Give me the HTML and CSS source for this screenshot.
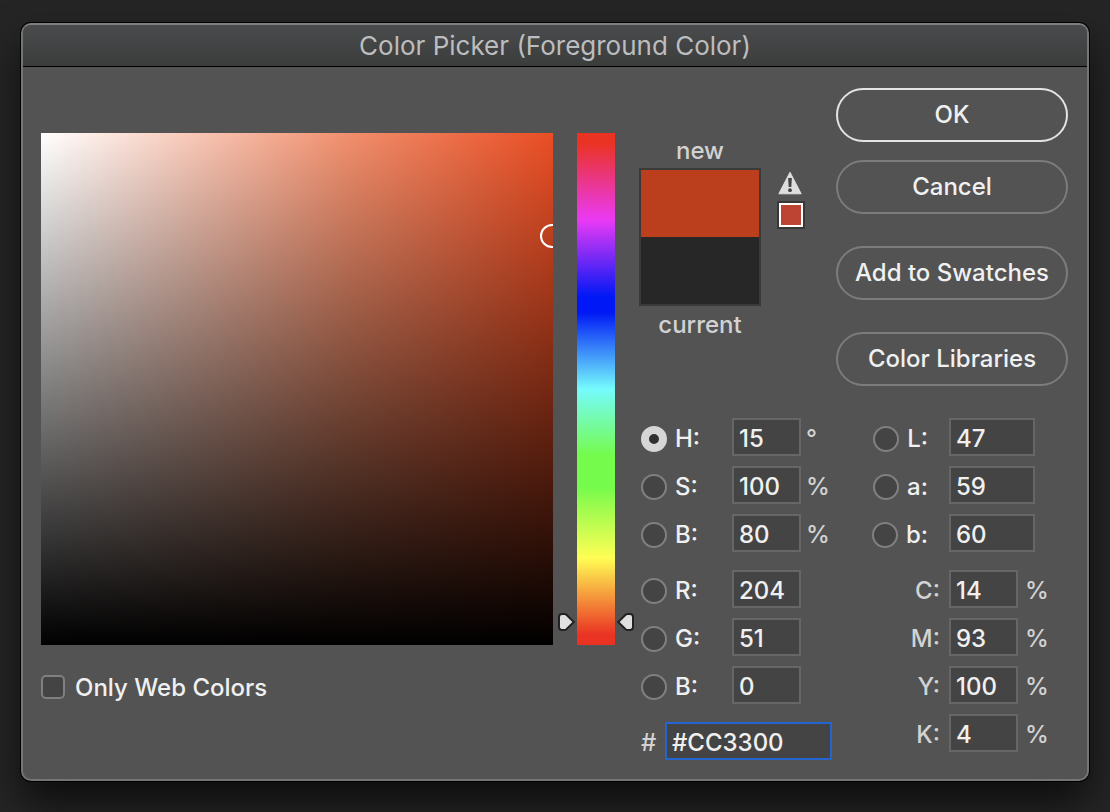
FILE: index.html
```html
<!DOCTYPE html>
<html lang="en">
<head>
<meta charset="utf-8">
<title>Color Picker</title>
<link rel="stylesheet" href="styles.css">
</head>
<body>
<main class="dialog">
  <header class="titlebar"><h1 class="title">Color Picker (Foreground Color)</h1></header>
  <form class="content">
    <section class="picker">
      <div class="picker-row">
        <div class="field"><span class="marker"></span></div>
        <div class="hue">
          <svg class="handle handle-left" width="20" height="20" viewBox="0 0 20 20"><path d="M5 2h2.400a3 3 0 0 1 2 .8L16.800 10l-7.400 7.200a3 3 0 0 1-2 .8H5a3 3 0 0 1-3-3V5a3 3 0 0 1 3-3z"/></svg>
          <svg class="handle handle-right" width="20" height="20" viewBox="0 0 20 20"><path d="M15 2h-2.400a3 3 0 0 0-2 .8L3.200 10l7.400 7.200a3 3 0 0 0 2 .8H15a3 3 0 0 0 3-3V5a3 3 0 0 0-3-3z"/></svg>
        </div>
      </div>
      <label class="web-only"><input class="check" type="checkbox"><span class="web-label">Only Web Colors</span></label>
    </section>

    <section class="panel">
      <div class="panel-top">
        <div class="preview">
          <span class="caption">new</span>
          <div class="swatches"><span class="swatch-new"></span><span class="swatch-current"></span></div>
          <span class="caption caption-current">current</span>
        </div>
        <div class="gamut">
          <svg width="26" height="24" viewBox="0 0 26 24"><path class="warn" d="M13 1.200L24.200 22.800H1.800z"/><path class="warn-mark" d="M11.100 7h3.800l-.6 9h-2.600z"/><circle class="warn-mark" cx="13" cy="19.200" r="1.900"/></svg>
          <span class="gamut-color"></span>
        </div>
        <div class="actions">
          <button class="btn btn-primary" type="button">OK</button>
          <button class="btn btn-cancel" type="button">Cancel</button>
          <button class="btn" type="button">Add to Swatches</button>
          <button class="btn" type="button">Color Libraries</button>
        </div>
      </div>

      <div class="values">
        <div class="column">
          <div class="group">
            <div class="row"><label class="mode"><input class="radio" type="radio" name="mode" checked>H:</label><input class="num" type="text" aria-label="Hue" value="15"><span class="unit">°</span></div>
            <div class="row"><label class="mode"><input class="radio" type="radio" name="mode">S:</label><input class="num" type="text" aria-label="Saturation" value="100"><span class="unit">%</span></div>
            <div class="row"><label class="mode"><input class="radio" type="radio" name="mode">B:</label><input class="num" type="text" aria-label="Brightness" value="80"><span class="unit">%</span></div>
          </div>
          <div class="group">
            <div class="row"><label class="mode"><input class="radio" type="radio" name="mode">R:</label><input class="num" type="text" aria-label="Red" value="204"></div>
            <div class="row"><label class="mode"><input class="radio" type="radio" name="mode">G:</label><input class="num" type="text" aria-label="Green" value="51"></div>
            <div class="row"><label class="mode"><input class="radio" type="radio" name="mode">B:</label><input class="num" type="text" aria-label="Blue" value="0"></div>
          </div>
          <div class="row"><label class="hash" for="hex">#</label><input class="num hex" id="hex" type="text" value="#CC3300"></div>
        </div>
        <div class="column column-right">
          <div class="group">
            <div class="row"><label class="mode mode-lab"><input class="radio" type="radio" name="mode">L:</label><input class="num num-lab" type="text" aria-label="Lightness" value="47"></div>
            <div class="row"><label class="mode mode-lab"><input class="radio" type="radio" name="mode">a:</label><input class="num num-lab" type="text" aria-label="a" value="59"></div>
            <div class="row"><label class="mode mode-lab"><input class="radio" type="radio" name="mode">b:</label><input class="num num-lab" type="text" aria-label="b" value="60"></div>
          </div>
          <div class="group">
            <div class="row"><label class="ink" for="c">C:</label><input class="num" id="c" type="text" value="14"><span class="unit unit-ink">%</span></div>
            <div class="row"><label class="ink" for="m">M:</label><input class="num" id="m" type="text" value="93"><span class="unit unit-ink">%</span></div>
            <div class="row"><label class="ink" for="y">Y:</label><input class="num" id="y" type="text" value="100"><span class="unit unit-ink">%</span></div>
            <div class="row"><label class="ink" for="k">K:</label><input class="num" id="k" type="text" value="4"><span class="unit unit-ink">%</span></div>
          </div>
        </div>
      </div>
    </section>
  </form>
</main>
</body>
</html>
```
FILE: styles.css
```css
* { box-sizing: border-box; }

body {
  margin: 0;
  padding: 23px 21px 31px;
  background: #252525;
  color: #f0f0f0;
  font: 500 24px/30px Inter, "Liberation Sans", sans-serif;
}

.dialog {
  border: 2px solid #757575;
  border-top-color: #7e8080;
  border-radius: 10px;
  background: #535353;
  box-shadow: 0 0 0 1px #000, 0 22px 40px rgba(0, 0, 0, .65);
}

.titlebar {
  display: flex;
  justify-content: center;
  align-items: center;
  height: 42px;
  border-bottom: 1px solid #000;
  border-radius: 8px 8px 0 0;
  background: linear-gradient(#4a4b4c, #3b3c3c);
}

.title {
  margin: 0;
  color: #bcbdbe;
  font-size: 26px;
  font-weight: 400;
}

.content {
  display: flex;
  gap: 24px;
  padding: 21px 19px 19px 18px;
}

.picker {
  flex: 1;
  padding-top: 45px;
}

.picker-row {
  display: flex;
  gap: 24px;
}

.field {
  position: relative;
  flex: 1;
  aspect-ratio: 1;
  overflow: hidden;
  background:
    linear-gradient(transparent, #000),
    linear-gradient(to right, #fff, #f18f6d 60%, #ea4e24);
}

.marker {
  position: absolute;
  top: 91px;
  right: -11px;
  width: 24px;
  height: 24px;
  border: 2px solid #fff;
  border-radius: 50%;
}

.hue {
  position: relative;
  width: 38px;
  background: linear-gradient(#ea3323, #ea3323 2%, #ea3af5 17%, #0018f5 32%, #0018f5 35%, #75fbfd 50%, #75fb4c 63%, #75fb4c 69%, #fffe54 83%, #ea3323 98%);
}

.handle {
  position: absolute;
  bottom: 13px;
  fill: #e0e0e0;
  stroke: #222;
  stroke-width: 2;
}

.handle-left { right: 100%; }
.handle-right { left: 100%; }

.web-only {
  display: flex;
  align-items: center;
  gap: 10px;
  margin-top: 26px;
}

.web-label { padding-top: 2px; }

.check,
.radio {
  appearance: none;
  flex: none;
  margin: 0;
  border: 2px solid #808080;
  background: #444;
}

.check {
  width: 24px;
  height: 24px;
  border-radius: 5px;
}

.radio {
  width: 26px;
  height: 26px;
  border-radius: 50%;
}

.radio:checked {
  border: 8px solid #d6d6d6;
  background: #303030;
}

.panel { width: 429px; }

.panel-top {
  display: flex;
  justify-content: space-between;
}

.preview {
  display: flex;
  flex-direction: column;
  align-items: center;
  gap: 2px;
  width: 122px;
  padding-top: 48px;
}

.caption { color: #d2d2d2; }
.caption-current { margin-top: 2px; }

.swatches {
  display: flex;
  flex-direction: column;
  width: 100%;
  height: 138px;
  border: 2px solid #3a3a3a;
}

.swatch-new {
  flex: 1;
  background: #bc3f1d;
}

.swatch-current {
  flex: 1;
  background: #272727;
}

.gamut {
  display: flex;
  flex-direction: column;
  gap: 6px;
  width: 28px;
  margin-right: 15px;
  padding-top: 83px;
}

.warn { fill: #dedede; stroke: #dedede; stroke-linejoin: round; }
.warn-mark { fill: #444; }

.gamut-color {
  height: 28px;
  border: 2px solid #383838;
  background: #bd4332;
  box-shadow: inset 0 0 0 2px #fff;
}

.actions {
  display: flex;
  flex-direction: column;
  gap: 32px;
  width: 232px;
}

.btn {
  height: 54px;
  padding: 0;
  border: 2px solid #7c7c7c;
  border-radius: 27px;
  background: transparent;
  color: inherit;
  font: inherit;
}

.btn-primary { border-color: #e4e4e4; }
.btn-cancel { margin-top: -14px; }

.values {
  display: flex;
  gap: 39px;
  margin-top: 32px;
}

.column,
.group {
  display: flex;
  flex-direction: column;
}

.column { gap: 18px; padding-left: 2px; }
.column-right { padding-left: 0; }
.group { gap: 10px; }

.row {
  display: flex;
  align-items: center;
  height: 38px;
}

.mode {
  display: flex;
  align-items: center;
  gap: 8px;
  width: 91px;
  padding-top: 4px;
}

.mode-lab {
  justify-content: flex-end;
  width: 78px;
  padding-right: 21px;
}

.num {
  width: 69px;
  height: 38px;
  padding: 3px 5px 0;
  border: 2px solid #666;
  border-radius: 0;
  outline: none;
  background: #444;
  color: inherit;
  font: inherit;
}

.num-lab { width: 86px; }

.hash {
  width: 24px;
  padding-top: 3px;
  color: #d2d2d2;
}

.hex {
  width: 167px;
  border-color: #2565d0;
}

.unit {
  width: 27px;
  padding: 4px 0 0 5px;
  color: #d2d2d2;
}

.unit-ink { padding-left: 7px; }

.ink {
  width: 78px;
  padding: 4px 9px 0 0;
  color: #d2d2d2;
  text-align: right;
}
```
